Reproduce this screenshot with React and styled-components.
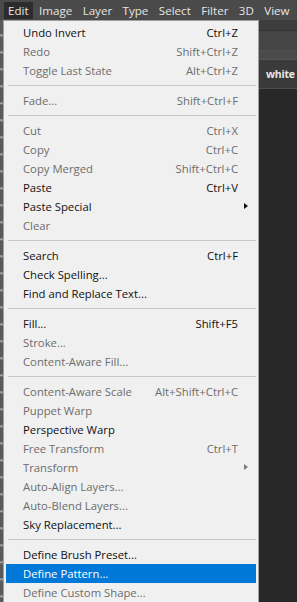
import React from 'react';
import styled, { createGlobalStyle } from 'styled-components';

const GlobalStyle = createGlobalStyle`
  html, body {
    margin: 0;
    padding: 0;
    background: #282828;
  }
  body {
    font-family: "Open Sans", "Noto Sans", "Liberation Sans", sans-serif;
  }
`;

const topMenus = ['Edit', 'Image', 'Layer', 'Type', 'Select', 'Filter', '3D', 'View'];

const groups = [
  [
    { label: 'Undo Invert', shortcut: 'Ctrl+Z' },
    { label: 'Redo', shortcut: 'Shift+Ctrl+Z', disabled: true },
    { label: 'Toggle Last State', shortcut: 'Alt+Ctrl+Z', disabled: true },
  ],
  [{ label: 'Fade...', shortcut: 'Shift+Ctrl+F', disabled: true }],
  [
    { label: 'Cut', shortcut: 'Ctrl+X', disabled: true },
    { label: 'Copy', shortcut: 'Ctrl+C', disabled: true },
    { label: 'Copy Merged', shortcut: 'Shift+Ctrl+C', disabled: true },
    { label: 'Paste', shortcut: 'Ctrl+V' },
    { label: 'Paste Special', submenu: true },
    { label: 'Clear', disabled: true },
  ],
  [
    { label: 'Search', shortcut: 'Ctrl+F' },
    { label: 'Check Spelling...' },
    { label: 'Find and Replace Text...' },
  ],
  [
    { label: 'Fill...', shortcut: 'Shift+F5' },
    { label: 'Stroke...', disabled: true },
    { label: 'Content-Aware Fill...', disabled: true },
  ],
  [
    { label: 'Content-Aware Scale', shortcut: 'Alt+Shift+Ctrl+C', disabled: true },
    { label: 'Puppet Warp', disabled: true },
    { label: 'Perspective Warp' },
    { label: 'Free Transform', shortcut: 'Ctrl+T', disabled: true },
    { label: 'Transform', submenu: true, disabled: true },
    { label: 'Auto-Align Layers...', disabled: true },
    { label: 'Auto-Blend Layers...', disabled: true },
    { label: 'Sky Replacement...' },
  ],
  [
    { label: 'Define Brush Preset...' },
    { label: 'Define Pattern...', active: true },
    { label: 'Define Custom Shape...', disabled: true },
  ],
];

export default function App() {
  return (
    <>
      <GlobalStyle />
      <Screen>
        <MenuBar>
          {topMenus.map((m, i) => (
            <TopItem key={m} open={i === 0}>{m}</TopItem>
          ))}
        </MenuBar>
        <Body>
          <ToolStrip />
          <Dropdown>
            {groups.map((group, gi) => (
              <React.Fragment key={gi}>
                {gi > 0 && <Separator />}
                {group.map((item) => (
                  <Row key={item.label} active={item.active} disabled={item.disabled}>
                    <Label>{item.label}</Label>
                    {item.shortcut && <Shortcut>{item.shortcut}</Shortcut>}
                    {item.submenu && <Arrow disabled={item.disabled} />}
                  </Row>
                ))}
              </React.Fragment>
            ))}
          </Dropdown>
          <Workspace>
            <Band tone="#3d3d3d" h={10} />
            <Band tone="#454545" h={19} line="#505050" />
            <Band tone="#4a4a4a" h={8} line="#555555" />
            <TabRow>white</TabRow>
            <Canvas />
          </Workspace>
        </Body>
      </Screen>
    </>
  );
}

const Screen = styled.div`
  width: 297px;
  height: 602px;
  overflow: hidden;
  display: flex;
  flex-direction: column;
  background: #282828;
`;

const MenuBar = styled.div`
  height: 20px;
  flex: none;
  display: flex;
  align-items: center;
  padding-left: 4px;
  background: #4a4a4a;
  white-space: nowrap;
`;

const TopItem = styled.div`
  height: 17px;
  display: flex;
  align-items: center;
  padding: 0 4px;
  margin-right: 2.4px;
  font-size: 11.6px;
  color: #e6e6e6;
  background: ${(p) => (p.open ? '#2c2c2c' : 'transparent')};
`;

const Body = styled.div`
  flex: 1;
  display: flex;
  min-height: 0;
`;

const ToolStrip = styled.div`
  width: 3px;
  flex: none;
  background: repeating-linear-gradient(
    180deg,
    #5a5a5a 0px,
    #5a5a5a 14px,
    #b5b5b5 15px,
    #5a5a5a 17px
  );
`;

const Dropdown = styled.div`
  width: 252px;
  flex: none;
  box-sizing: content-box;
  border: 1px solid #a0a0a0;
  border-bottom: none;
  padding: 2px 1px 0 1px;
  background: #f0f0f0;
  overflow: hidden;
`;

const Row = styled.div`
  height: 19px;
  display: flex;
  align-items: center;
  margin: 0 1px;
  padding: 0 18px 0 17px;
  position: relative;
  font-size: 11.3px;
  white-space: nowrap;
  color: ${(p) => (p.disabled ? '#6d6d6d' : '#111111')};
  background: ${(p) => (p.active ? '#0078d7' : 'transparent')};
  ${(p) => p.active && 'color: #ffffff;'}
`;

const Label = styled.span`
  flex: 1;
`;

const Shortcut = styled.span`
  text-align: right;
`;

const Arrow = styled.span`
  position: absolute;
  right: 8px;
  top: 6px;
  width: 0;
  height: 0;
  border-top: 3.5px solid transparent;
  border-bottom: 3.5px solid transparent;
  border-left: 4px solid ${(p) => (p.disabled ? '#7a7a7a' : '#111111')};
`;

const Separator = styled.div`
  height: 1px;
  margin: 5px 1px 5px 3px;
  background: #c8c8c8;
`;

const Workspace = styled.div`
  flex: 1;
  display: flex;
  flex-direction: column;
  min-width: 0;
`;

const Band = styled.div`
  height: ${(p) => p.h}px;
  flex: none;
  background: ${(p) => p.tone};
  border-bottom: 1px solid ${(p) => p.line || '#333333'};
`;

const TabRow = styled.div`
  height: 28px;
  flex: none;
  display: flex;
  align-items: center;
  padding-left: 7px;
  background: #3a3a3a;
  border-bottom: 1px solid #4d4d4d;
  color: #e8e8e8;
  font-weight: 700;
  font-size: 10.5px;
  letter-spacing: -0.2px;
  white-space: nowrap;
`;

const Canvas = styled.div`
  flex: 1;
  background: #282828;
`;
